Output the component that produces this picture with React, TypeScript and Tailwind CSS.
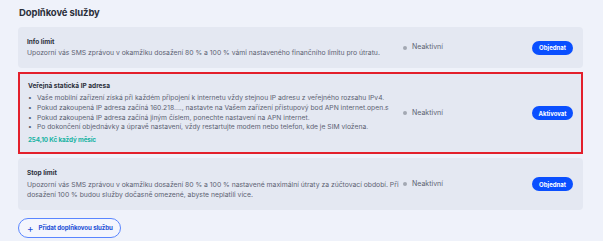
const font = { fontFamily: 'Inter, "Noto Sans", sans-serif' };

function Status() {
  return (
    <div className="flex items-center gap-[5px] text-[7px] text-[#5d6372]">
      <span className="w-[4px] h-[4px] rounded-full bg-[#a3a8b3]"></span>
      Neaktivní
    </div>
  );
}

function Btn({ label }: { label: string }) {
  return (
    <button className="h-[14px] w-[41px] rounded-full bg-[#0a4fff] text-white text-[6px] font-bold flex items-center justify-center">
      {label}
    </button>
  );
}

export default function App() {
  const bullets = [
    'Vaše mobilní zařízení získá při každém připojení k internetu vždy stejnou IP adresu z veřejného rozsahu IPv4.',
    'Pokud zakoupená IP adresa začíná 160.218...., nastavte na Vašem zařízení přístupový bod APN internet.open.s',
    'Pokud zakoupená IP adresa začíná jiným číslem, ponechte nastavení na APN internet.',
    'Po dokončení objednávky a úpravě nastavení, vždy restartujte modem nebo telefon, kde je SIM vložena.',
  ];
  return (
    <div style={font} className="w-[603px] h-[241px] bg-[#eff2fa] pl-[18px] pt-[6px] text-[#2b2f3a] overflow-hidden">
      <h1 className="text-[9.5px] font-bold leading-[14px] pl-[1px] tracking-[-0.1px]">Doplňkové služby</h1>
      <div className="w-[565px] mt-[7px] flex flex-col gap-[4px]">
        <div className="h-[41px] rounded-[4px] bg-[#e4e8f2] pl-[9px] pr-[10px] flex items-center">
          <div className="w-[360px]">
            <div className="text-[6.5px] font-bold leading-[10px]">Info limit</div>
            <div className="text-[6.8px] leading-[10px] text-[#5d6372] mt-[1px]">
              Upozorní vás SMS zprávou v okamžiku dosažení 80 % a 100 % vámi nastaveného finančního limitu pro útratu.
            </div>
          </div>
          <div className="flex-1 pl-[16px]"><Status /></div>
          <Btn label="Objednat" />
        </div>

        <div className="h-[82px] border-2 border-[#e3202c] bg-[#e4e8f2] pl-[8px] pr-[8px] flex items-center">
          <div className="w-[359px]">
            <div className="text-[6.5px] font-bold leading-[10px]">Veřejná statická IP adresa</div>
            <ul className="mt-[2px]">
              {bullets.map((b) => (
                <li key={b} className="flex text-[6.75px] leading-[9.7px] text-[#5d6372]">
                  <span className="w-[9px] shrink-0">•</span>
                  <span className="whitespace-nowrap">{b}</span>
                </li>
              ))}
            </ul>
            <div className="text-[6.3px] font-bold leading-[10px] text-[#17b3a3] mt-[3px] tracking-[-0.1px]">254,10 Kč každý měsíc</div>
          </div>
          <div className="flex-1 pl-[16px]"><Status /></div>
          <Btn label="Aktivovat" />
        </div>

        <div className="h-[52px] rounded-[4px] bg-[#e4e8f2] pl-[9px] pr-[10px] flex items-center">
          <div className="w-[376px]">
            <div className="text-[6.5px] font-bold leading-[10px]">Stop limit</div>
            <div className="text-[6.8px] leading-[10px] text-[#5d6372] mt-[2px]">
              Upozorní vás SMS zprávou v okamžiku dosažení 80 % a 100 % nastavené maximální útraty za zúčtovací období. Při dosažení 100 % budou služby dočasně omezené, abyste neplatili více.
            </div>
          </div>
          <div className="flex-1"><Status /></div>
          <Btn label="Objednat" />
        </div>
      </div>
      <button className="mt-[8px] h-[20px] pl-[8px] pr-[7px] rounded-full border border-[#5a86ff] bg-[#f4f6fd] text-[#1d4fd6] text-[6.2px] font-bold flex items-center gap-[5px] tracking-[-0.1px]">
        <span className="text-[10px] font-normal leading-none">+</span>
        Přidat doplňkovou službu
      </button>
    </div>
  );
}
